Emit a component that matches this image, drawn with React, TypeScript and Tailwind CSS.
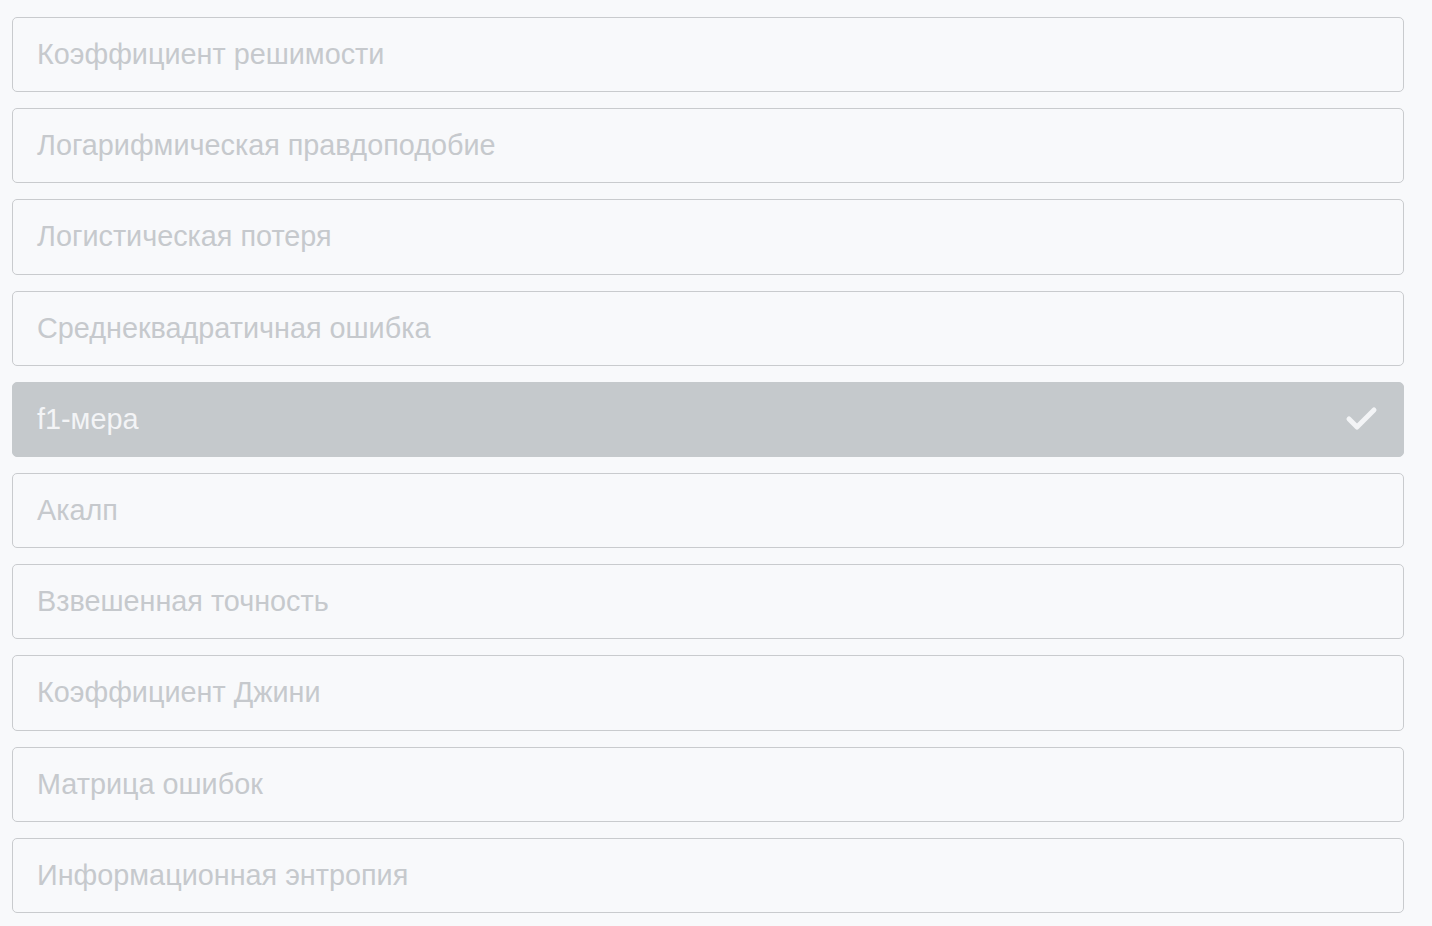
const metrics = [
  'Коэффициент решимости',
  'Логарифмическая правдоподобие',
  'Логистическая потеря',
  'Среднеквадратичная ошибка',
  'f1-мера',
  'Акалп',
  'Взвешенная точность',
  'Коэффициент Джини',
  'Матрица ошибок',
  'Информационная энтропия',
]

const selected = 'f1-мера'

function CheckIcon() {
  return (
    <svg width="34" height="30" viewBox="0 0 34 30" fill="none" className="shrink-0">
      <polyline
        points="4,15 12,23 29,6"
        stroke="currentColor"
        strokeWidth="5"
        strokeLinecap="round"
        strokeLinejoin="round"
      />
    </svg>
  )
}

export default function App() {
  return (
    <div className="min-h-[926px] bg-[#f8f9fb] pl-3 pt-[17px] font-['Liberation_Sans',Arial,sans-serif]">
      <div className="flex w-[1392px] flex-col gap-4">
        {metrics.map(name => {
          const active = name === selected
          return (
            <div
              key={name}
              className={`flex h-[75.2px] items-center justify-between rounded-[5px] border pl-6 pr-6 text-[28.8px] ${
                active
                  ? 'border-[#c5c9cc] bg-[#c5c9cc] text-[#f3f4f6]'
                  : 'border-[#c9cbce] bg-[#f8f9fb] text-[#c6c9cd]'
              }`}
            >
              <span>{name}</span>
              {active && <CheckIcon />}
            </div>
          )
        })}
      </div>
    </div>
  )
}
